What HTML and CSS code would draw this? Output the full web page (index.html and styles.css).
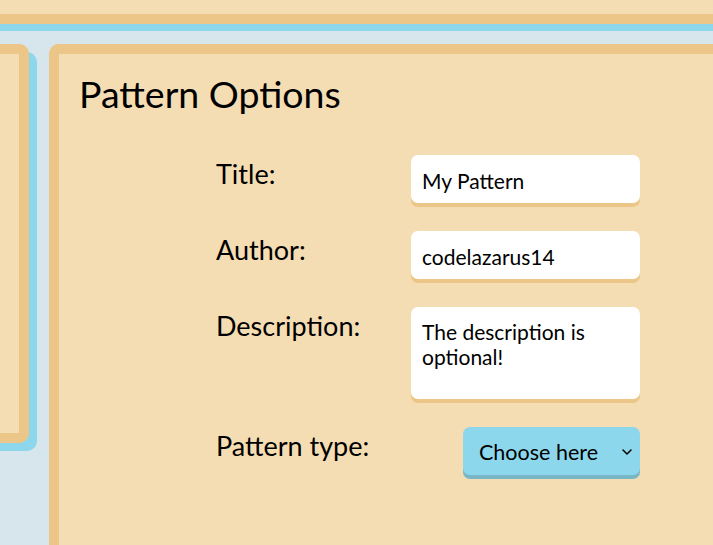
FILE: index.html
```html
<!DOCTYPE html>
<html lang="en">
<head>
<meta charset="utf-8">
<title>Pattern Options</title>
<link rel="stylesheet" href="styles.css">
</head>
<body>
<header class="topbar"></header>
<main class="workspace">
  <aside class="side-panel"></aside>
  <section class="options-panel">
    <h1 class="options-title">Pattern Options</h1>
    <form class="options-form">
      <label class="field-label" for="title">Title:</label>
      <input class="text-field" id="title" type="text" value="My Pattern">

      <label class="field-label" for="author">Author:</label>
      <input class="text-field" id="author" type="text" value="codelazarus14">

      <label class="field-label" for="desc">Description:</label>
      <textarea class="text-area" id="desc">The description is optional!</textarea>

      <label class="field-label" for="ptype">Pattern type:</label>
      <div class="select-wrap">
        <select class="select-field" id="ptype">
          <option>Choose here</option>
        </select>
        <svg class="select-chevron" width="10" height="6" viewBox="0 0 10 6"><path d="M1 1 L5 5 L9 1" fill="none" stroke="#000" stroke-width="1.5" stroke-linecap="round" stroke-linejoin="round"/></svg>
      </div>
    </form>
  </section>
</main>
</body>
</html>
```

FILE: styles.css
```css
* { box-sizing: border-box; }

html, body {
  margin: 0;
  height: 100%;
}

body {
  background: #d7e6ec;
  font-family: "Lato", "Open Sans", sans-serif;
  color: #000;
  overflow: hidden;
}

.topbar {
  height: 24px;
  background: #f5ddb3;
  border-bottom: 10px solid #ebc688;
  box-shadow: 0 7px 0 #8dd7ec;
}

.workspace {
  display: flex;
  align-items: flex-start;
  gap: 20px;
  padding-top: 20px;
  height: calc(100% - 24px);
}

.side-panel {
  flex: 0 0 29px;
  height: 399px;
  background: #f5ddb3;
  border: 10px solid #ebc688;
  border-left: 0;
  border-radius: 0 10px 10px 0;
  box-shadow: 8px 8px 0 #8dd7ec, 0 8px 0 #8dd7ec;
}

.options-panel {
  flex: 1 1 auto;
  align-self: stretch;
  background: #f5ddb3;
  border: 10px solid #ebc688;
  border-right: 0;
  border-bottom: 0;
  border-radius: 10px 0 0 0;
  padding: 17px 20px;
}

.options-title {
  margin: 0;
  font-size: 37.5px;
  font-weight: 400;
  line-height: 45px;
}

.options-form {
  display: grid;
  grid-template-columns: 195px 229px;
  row-gap: 28px;
  margin: 39px 0 0 137px;
}

.field-label {
  font-size: 27px;
  line-height: 32px;
  padding-top: 3px;
  align-self: start;
}

.text-field,
.text-area {
  width: 229px;
  border: 0;
  border-radius: 7px;
  background: #fff;
  box-shadow: 0 4px 0 #ebc688;
  font-family: inherit;
  font-size: 21px;
  color: #000;
  outline: none;
}

.text-field {
  height: 48px;
  padding: 2px 11px 0;
}

.text-area {
  height: 92px;
  padding: 12px 11px 0;
  line-height: 25px;
  resize: none;
  overflow: hidden;
}

.select-wrap {
  position: relative;
  justify-self: end;
  width: 177px;
  height: 48px;
}

.select-field {
  appearance: none;
  -webkit-appearance: none;
  width: 100%;
  height: 48px;
  border: 0;
  border-radius: 7px;
  background: #8dd7ec;
  box-shadow: 0 4px 0 #79b7c7;
  font-family: inherit;
  font-size: 21.5px;
  color: #000;
  padding: 2px 0 0 16px;
  outline: none;
}

.select-chevron {
  position: absolute;
  right: 8px;
  top: 22px;
  pointer-events: none;
}
```
